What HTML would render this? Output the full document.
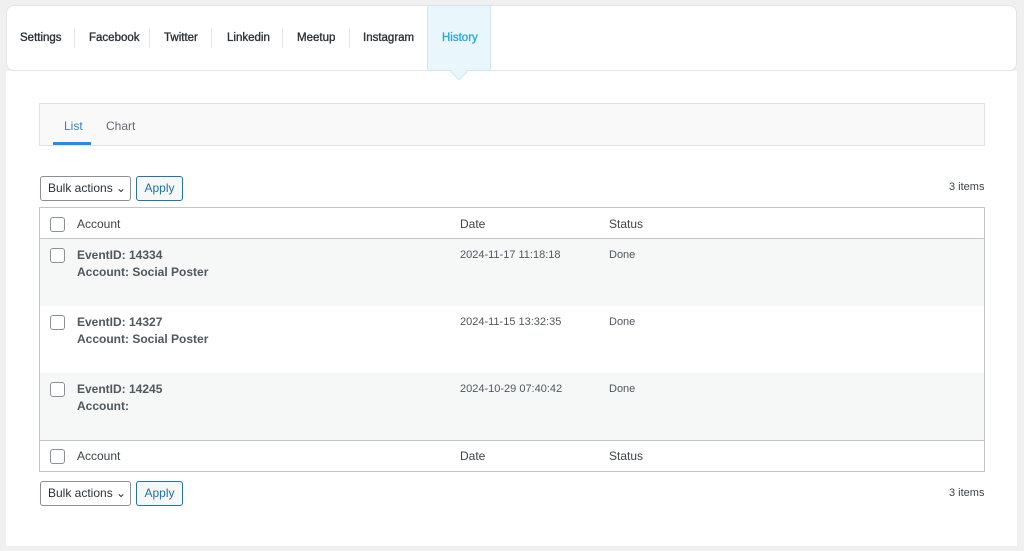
<!DOCTYPE html>
<html><head><style>
body{margin:0;width:1024px;height:551px;background:#f0f0f1;font-family:"Liberation Sans",sans-serif;font-size:12px;color:#3c434a;position:relative;overflow:hidden}
.card{position:absolute;left:6px;top:5px;width:1011px;height:66px;background:#fff;border-radius:8px;border:1px solid #e2e4e7;box-sizing:border-box}
.tab{position:absolute;top:32px;font-size:11.5px;color:#2c3338;-webkit-text-stroke:0.35px #2c3338}
.sep{position:absolute;top:28px;width:1px;height:20px;background:#e5e5e5}
.hist{position:absolute;left:427px;top:5px;width:64px;height:66px;background:#e9f6fc;border:1px solid #cde8f4;box-sizing:border-box;border-radius:3px;z-index:2}
.arrow{position:absolute;left:453px;top:66px;width:11px;height:11px;background:#e9f6fc;transform:rotate(45deg);border-right:1px solid #cde8f4;border-bottom:1px solid #cde8f4;z-index:3}
.main{position:absolute;left:6px;top:71px;width:1011px;height:475px;background:#fff}
.sub{position:absolute;left:39px;top:103px;width:946px;height:43px;background:#f9f9f9;border:1px solid #e2e2e2;box-sizing:border-box}
.btn{position:absolute;height:25px;box-sizing:border-box;border-radius:3px;font-size:12px;line-height:23px}
.bulk{left:40px;width:91px;border:1px solid #8c8f94;color:#2c3338;padding-left:7px;background:#fff}
.apply{left:136px;width:47px;border:1px solid #2271b1;color:#2271b1;background:#f6f7f7;text-align:center}
.items{position:absolute;left:949px;font-size:11px;color:#3c434a}
.tbl{position:absolute;left:39px;top:207px;width:946px;height:265px;border:1px solid #c3c4c7;box-sizing:border-box;background:#fff}
.row{position:absolute;left:0;width:944px}
.cb{position:absolute;left:10px;width:13px;height:13px;border:1px solid #8c8f94;border-radius:3px;background:#fff}
.t{position:absolute;font-size:12px}
.s{font-size:11px;color:#50575e}
.b{font-weight:bold;color:#50575e;line-height:17px}
</style></head><body>
<div class="card"></div>
<div class="main"></div>
<div class="hist"></div><div class="arrow"></div>
<div class="tab" style="left:20px">Settings</div><div class="sep" style="left:74px"></div>
<div class="tab" style="left:89px">Facebook</div><div class="sep" style="left:149px"></div>
<div class="tab" style="left:164px">Twitter</div><div class="sep" style="left:211px"></div>
<div class="tab" style="left:227px">Linkedin</div><div class="sep" style="left:282px"></div>
<div class="tab" style="left:297px">Meetup</div><div class="sep" style="left:349px"></div>
<div class="tab" style="left:363px">Instagram</div>
<div class="tab" style="left:442px;color:#29a9e0;-webkit-text-stroke:0.35px #29a9e0;z-index:4">History</div>
<div class="sub">
<div style="position:absolute;left:24px;top:15px;color:#3582c4">List</div>
<div style="position:absolute;left:13px;top:38px;width:38px;height:3px;background:#1e8cf0"></div>
<div style="position:absolute;left:66px;top:15px;color:#646970">Chart</div>
</div>
<div class="btn bulk" style="top:176px">Bulk actions ⌄</div>
<div class="btn apply" style="top:176px">Apply</div>
<div class="items" style="top:181px">3 items</div>
<div class="tbl">
<div class="row" style="top:0;height:30px;border-bottom:1px solid #c3c4c7">
<div class="cb" style="top:9px"></div><div class="t" style="left:37px;top:9px">Account</div><div class="t" style="left:420px;top:9px">Date</div><div class="t" style="left:569px;top:9px">Status</div></div>
<div class="row" style="top:31px;height:67px;background:#f6f7f7">
<div class="cb" style="top:9px"></div><div class="t b" style="left:37px;top:8px">EventID: 14334<br>Account: Social Poster</div><div class="t s" style="left:420px;top:10px">2024-11-17 11:18:18</div><div class="t s" style="left:569px;top:10px">Done</div></div>
<div class="row" style="top:98px;height:67px">
<div class="cb" style="top:9px"></div><div class="t b" style="left:37px;top:8px">EventID: 14327<br>Account: Social Poster</div><div class="t s" style="left:420px;top:10px">2024-11-15 13:32:35</div><div class="t s" style="left:569px;top:10px">Done</div></div>
<div class="row" style="top:165px;height:67px;background:#f6f7f7;border-bottom:1px solid #c3c4c7">
<div class="cb" style="top:9px"></div><div class="t b" style="left:37px;top:8px">EventID: 14245<br>Account:</div><div class="t s" style="left:420px;top:10px">2024-10-29 07:40:42</div><div class="t s" style="left:569px;top:10px">Done</div></div>
<div class="row" style="top:233px;height:30px">
<div class="cb" style="top:8px"></div><div class="t" style="left:37px;top:8px">Account</div><div class="t" style="left:420px;top:8px">Date</div><div class="t" style="left:569px;top:8px">Status</div></div>
</div>
<div class="btn bulk" style="top:481px">Bulk actions ⌄</div>
<div class="btn apply" style="top:481px">Apply</div>
<div class="items" style="top:487px">3 items</div>
</body></html>
